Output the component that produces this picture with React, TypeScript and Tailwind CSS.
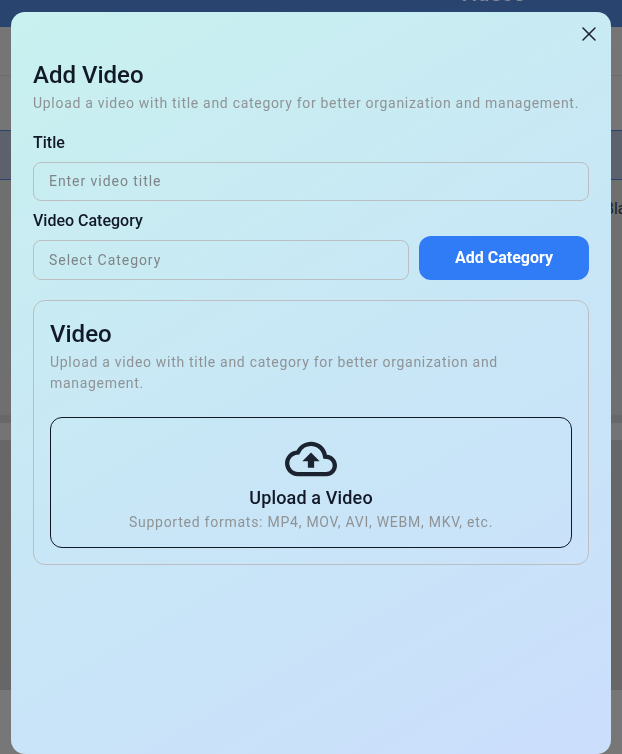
import { X } from "lucide-react";
import { MdOutlineCloudUpload } from "react-icons/md";

function Backdrop() {
  return (
    <div className="min-h-[754px] w-full flex flex-col bg-[#757575] overflow-hidden">
      <div className="h-[27px] bg-[#29446f] shrink-0 flex justify-end pr-[97px]">
        <span className="text-[22px] leading-[0px] -mt-[6px] font-medium text-[#7f8a9a]">Videos</span>
      </div>
      <div className="h-[49px] border-b border-[#6b6b6b] shrink-0"></div>
      <div className="h-[55px] border-b border-[#29446f] shrink-0"></div>
      <div className="h-[49px] bg-[#5d616e] border-b border-[#29446f] shrink-0"></div>
      <div className="h-[235px] bg-[#6f6f6f] shrink-0 flex justify-end">
        <span className="text-base leading-6 text-[#1e1e1e] pt-[17px] w-[18px] overflow-hidden">Bla</span>
      </div>
      <div className="h-[8px] bg-[#686868] shrink-0"></div>
      <div className="h-[17px] bg-[#747474] shrink-0"></div>
      <div className="h-[250px] bg-[#676767] shrink-0"></div>
      <div className="flex-1 bg-[#777777]"></div>
    </div>
  );
}

export default function App() {
  return (
    <div className="relative w-full h-[754px] overflow-hidden font-['Roboto',sans-serif]">
      <Backdrop />

      <div className="absolute left-[11px] top-[12px] w-[600px] h-[742px] rounded-[14px] bg-linear-150 from-[#c9f1ef] via-[#c8e7f6] to-[#cbdefc] px-[22px] pt-[48px] will-change-transform">
        <button className="absolute right-[10px] top-[10px] text-[#1c2230]">
          <X size={24} strokeWidth={1.5} />
        </button>

        <h2 className="text-2xl leading-[30px] font-medium text-[#111827]">Add Video</h2>
        <p className="text-sm leading-5 tracking-[0.7px] text-[#8f9396] mt-[3px]">
          Upload a video with title and category for better organization and management.
        </p>

        <label className="block text-base leading-6 font-medium text-[#111827] mt-[18px]">Title</label>
        <input
          placeholder="Enter video title"
          className="block w-full h-[39px] mt-[7px] rounded-lg border border-[#bcbfc2] bg-transparent px-[15px] pb-[1px] text-sm tracking-[0.95px] placeholder:text-[#7f8487]"
        />

        <label className="block text-base leading-6 font-medium text-[#111827] mt-[8px]">Video Category</label>
        <div className="flex items-end gap-[10px] mt-[3px]">
          <div className="flex-1 h-[40px] rounded-lg border border-[#bcbfc2] px-[15px] flex items-center text-sm tracking-[0.95px] text-[#7f8487]">
            Select Category
          </div>
          <button className="w-[170px] h-[44px] rounded-xl bg-[#2f7cf6] text-white text-base font-bold">
            Add Category
          </button>
        </div>

        <div className="mt-[20px] rounded-xl border border-[#bcbfc2] px-4 pt-[17px] pb-4">
          <h3 className="text-2xl leading-[32px] font-medium text-[#111827]">Video</h3>
          <p className="text-sm leading-[21px] tracking-[0.7px] text-[#8f9396] mt-[2px]">
            Upload a video with title and category for better organization and management.
          </p>
          <div className="mt-[23px] h-[131px] rounded-xl border border-[#111827] flex flex-col items-center pt-[15px]">
            <MdOutlineCloudUpload size={52} className="text-[#1b2330]" />
            <span className="text-lg leading-6 font-medium tracking-[0.15px] text-[#111827] mt-[1px]">Upload a Video</span>
            <span className="text-sm leading-5 tracking-[0.75px] text-[#8f9396] mt-[2px]">
              Supported formats: MP4, MOV, AVI, WEBM, MKV, etc.
            </span>
          </div>
        </div>
      </div>
    </div>
  );
}
